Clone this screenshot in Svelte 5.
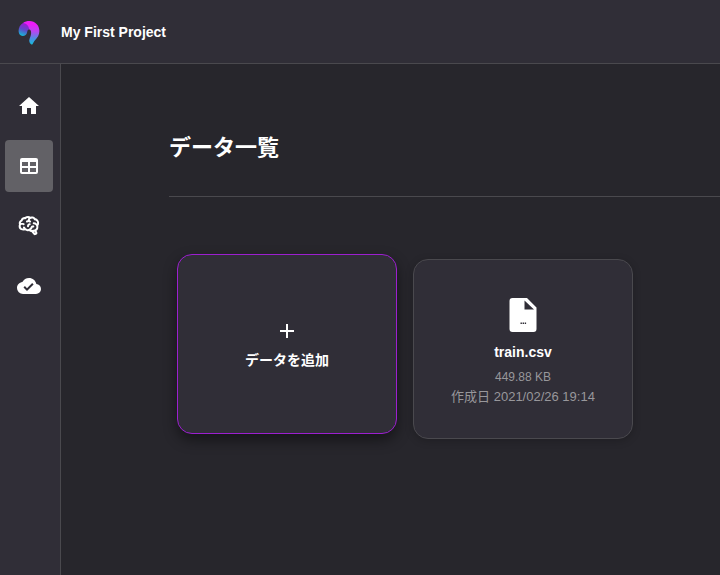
<script lang="ts">
  type NavItem = { id: string; label: string; path: string };

  const navItems: NavItem[] = [
    {
      id: "home",
      label: "ホーム",
      path: "M10,20V14H14V20H19V12H22L12,3L2,12H5V20H10Z",
    },
    {
      id: "data",
      label: "データ",
      path: "M5,4H19A2,2 0 0,1 21,6V18A2,2 0 0,1 19,20H5A2,2 0 0,1 3,18V6A2,2 0 0,1 5,4M5,8V12H11V8H5M13,8V12H19V8H13M5,14V18H11V14H5M13,14V18H19V14H13Z",
    },
    {
      id: "training",
      label: "学習",
      path: "M21.33,12.91C21.42,14.46 20.71,15.95 19.44,16.86L20.21,18.35C20.44,18.8 20.47,19.33 20.27,19.8C20.08,20.27 19.69,20.64 19.21,20.8L18.42,21.05C18.25,21.11 18.06,21.14 17.88,21.14C17.37,21.14 16.89,20.91 16.56,20.5L14.44,18C13.55,17.85 12.71,17.47 12,16.9C11.5,17.05 11,17.13 10.5,17.13C9.62,17.13 8.74,16.86 8,16.34C7.47,16.5 6.93,16.57 6.38,16.56C5.59,16.57 4.81,16.41 4.08,16.11C2.65,15.47 1.7,14.07 1.65,12.5C1.57,11.78 1.69,11.05 2,10.39C1.71,9.64 1.68,8.82 1.93,8.06C2.3,7.11 3,6.32 3.87,5.82C4.45,4.13 6.08,3 7.87,3.12C9.47,1.62 11.92,1.46 13.7,2.75C14.12,2.64 14.56,2.58 15,2.58C16.36,2.55 17.65,3.15 18.5,4.22C20.54,4.75 22,6.57 22.08,8.69C22.13,9.8 21.83,10.89 21.22,11.82C21.29,12.18 21.33,12.54 21.33,12.91M16.33,11.5C16.9,11.57 17.35,12 17.35,12.57A1,1 0 0,1 16.35,13.57H15.72C15.4,14.47 14.84,15.26 14.1,15.86C14.35,15.95 14.61,16 14.87,16.07C20,16 19.4,12.87 19.4,12.82C19.34,11.39 18.14,10.27 16.71,10.33A1,1 0 0,1 15.71,9.33A1,1 0 0,1 16.71,8.33C17.94,8.36 19.12,8.82 20.04,9.63C20.09,9.34 20.12,9.04 20.12,8.74C20.06,7.5 19.5,6.42 17.25,6.21C16,3.25 12.85,4.89 12.85,5.81V5.81C12.82,6.04 13.06,6.53 13.1,6.56A1,1 0 0,1 14.1,7.56C14.1,8.11 13.65,8.56 13.1,8.56V8.56C12.57,8.54 12.07,8.34 11.67,8C11.19,8.31 10.64,8.5 10.07,8.56V8.56C9.5,8.61 9.03,8.21 9,7.66C8.92,7.1 9.33,6.61 9.88,6.56C10.04,6.54 10.82,6.42 10.82,5.79V5.79C10.82,5.13 11.07,4.5 11.5,4C10.58,3.75 9.59,4.08 8.59,5.29C6.75,5 6,5.25 5.45,7.2C4.5,7.67 4,8 3.78,9C4.86,8.78 5.97,8.87 7,9.25C7.5,9.44 7.78,10 7.59,10.54C7.4,11.06 6.82,11.32 6.3,11.13C5.57,10.81 4.75,10.79 4,11.07C3.68,11.34 3.68,11.9 3.68,12.34C3.68,13.08 4.05,13.77 4.68,14.17C5.21,14.44 5.8,14.58 6.39,14.57C6.24,14.31 6.11,14.04 6,13.76C5.81,13.22 6.1,12.63 6.64,12.44C7.18,12.25 7.77,12.54 7.96,13.08C8.36,14.22 9.38,15 10.58,15.13C11.95,15.06 13.17,14.25 13.77,13C14,11.62 15.11,11.5 16.33,11.5M18.33,18.97L17.71,17.67L17,17.83L18,19.08L18.33,18.97M13.68,10.36C13.7,9.83 13.3,9.38 12.77,9.33C12.06,9.29 11.37,9.53 10.84,10C10.27,10.58 9.97,11.38 10,12.19A1,1 0 0,0 11,13.19C11.57,13.19 12,12.74 12,12.19C12,11.92 12.07,11.65 12.23,11.43C12.35,11.33 12.5,11.28 12.66,11.28C13.21,11.31 13.68,10.9 13.68,10.36Z",
    },
    {
      id: "deploy",
      label: "デプロイ",
      path: "M10,17L6.5,13.5L7.91,12.08L10,14.17L15.18,9L16.59,10.41M19.35,10.03C18.67,6.59 15.64,4 12,4C9.11,4 6.6,5.64 5.35,8.03C2.34,8.36 0,10.9 0,14A6,6 0 0,0 6,20H19A5,5 0 0,0 24,15C24,12.28 21.95,10.22 19.35,10.03Z",
    },
  ];

  const files = [
    { name: "train.csv", size: "449.88 KB", created: "2021/02/26 19:14" },
  ];

  let current = $state("data");
</script>

<div class="app">
  <header class="header">
    <svg class="logo" viewBox="0 0 22 26" aria-hidden="true">
      <defs>
        <linearGradient id="tail" x1="0.5" y1="0" x2="0.5" y2="1">
          <stop offset="0.15" stop-color="#ec1cf8" />
          <stop offset="0.45" stop-color="#b448f0" />
          <stop offset="0.75" stop-color="#4890e4" />
          <stop offset="1" stop-color="#10c0d8" />
        </linearGradient>
        <linearGradient id="head" x1="0.6" y1="0" x2="0.3" y2="1">
          <stop offset="0.1" stop-color="#9420d0" />
          <stop offset="0.5" stop-color="#6048c8" />
          <stop offset="1" stop-color="#10c0d8" />
        </linearGradient>
      </defs>
      <path
        fill="url(#tail)"
        d="M5,3C7,1.4 9,1 11.5,1C17.2,1 21.4,5.4 21.4,11C21.4,15.2 19.4,17.8 17,20.2C15.8,21.6 15.2,23.4 14,24.8C11.6,23.6 10.6,21.4 11.6,18.8C12.8,16 13.4,13.8 13,11.6C12.6,9.6 11,8.8 9.8,9.6Z"
      />
      <path
        fill="url(#head)"
        d="M5,3C8,3.2 10.6,5.4 11.2,8.9C9.8,9.4 9.4,10.6 9.2,12C8.8,14.4 7,16 4.8,16C2.2,16 0.6,13.6 0.6,10.8C0.6,7.6 2.2,4.6 5,3Z"
      />
    </svg>
    <span class="project-name">My First Project</span>
  </header>

  <div class="body">
    <nav class="sidebar">
      {#each navItems as item (item.id)}
        <button
          class="nav-btn"
          class:active={current === item.id}
          aria-label={item.label}
          onclick={() => (current = item.id)}
        >
          <svg class="icon" viewBox="0 0 24 24"><path d={item.path} /></svg>
        </button>
      {/each}
    </nav>

    <main class="content">
      <h1 class="title">データ一覧</h1>

      <div class="cards">
        <button class="card add">
          <svg class="icon" viewBox="0 0 24 24">
            <path d="M19,13H13V19H11V13H5V11H11V5H13V11H19V13Z" />
          </svg>
          <span class="card-name">データを追加</span>
        </button>

        {#each files as file (file.name)}
          <button class="card">
            <svg class="file-icon" viewBox="0 0 40 40">
              <path
                fill-rule="evenodd"
                d="M9.5,3H24L33.5,12.5V34A3,3 0 0,1 30.5,37H9.5A3,3 0 0,1 6.5,34V6A3,3 0 0,1 9.5,3ZM21.5,5.5V14.5H31Z"
              />
              <path class="dots" d="M17.5,27.5h1.4v1.6h-1.4zM19.6,27.5h1.4v1.6h-1.4zM21.7,27.5h1.4v1.6h-1.4z" />
            </svg>
            <span class="card-name">{file.name}</span>
            <span class="size">{file.size}</span>
            <span class="date">作成日 {file.created}</span>
          </button>
        {/each}
      </div>
    </main>
  </div>
</div>

<style>
  :global(body) {
    margin: 0;
    background: #27262c;
  }

  .app {
    display: flex;
    flex-direction: column;
    min-height: 100vh;
    color: #fff;
    font-family: "Liberation Sans", "Noto Sans CJK JP", sans-serif;
  }

  .header {
    display: flex;
    align-items: center;
    gap: 21px;
    height: 63px;
    padding: 0 18px;
    background: #302e37;
    border-bottom: 1px solid #4a494e;
  }

  .logo {
    width: 22px;
    height: 26px;
    padding-top: 2px;
  }

  .project-name {
    font-size: 14px;
    font-weight: 700;
  }

  .body {
    display: flex;
    flex: 1;
  }

  .sidebar {
    display: flex;
    flex-direction: column;
    gap: 8px;
    padding: 16px 7px 16px 5px;
    background: #302e37;
    border-right: 1px solid #4a494e;
  }

  .nav-btn {
    display: flex;
    align-items: center;
    justify-content: center;
    width: 48px;
    height: 52px;
    padding: 0;
    border: none;
    border-radius: 4px;
    background: none;
    cursor: pointer;
  }
  .nav-btn.active { background: #626166; }

  .icon {
    width: 24px;
    height: 24px;
    fill: #fff;
  }

  .content {
    flex: 1;
    min-width: 0;
    padding: 66px 0 64px 108px;
  }

  .title {
    margin: 0;
    padding-bottom: 30px;
    border-bottom: 1px solid #4a494e;
    font-size: 22px;
    line-height: 36px;
  }

  .cards {
    display: flex;
    flex-wrap: wrap;
    gap: 16px;
    padding: 62px 8px;
  }

  .card {
    display: flex;
    flex-direction: column;
    align-items: center;
    justify-content: center;
    box-sizing: border-box;
    width: 220px;
    height: 180px;
    padding: 3px 0 0;
    border: 1px solid #4a494e;
    border-radius: 15px;
    background: #302e37;
    box-shadow: 0 2px 8px rgba(0, 0, 0, 0.2);
    color: #fff;
    font-family: inherit;
    cursor: pointer;
  }

  .card.add {
    gap: 5px;
    border-color: #9c1fd0;
    box-shadow: 0 6px 14px rgba(0, 0, 0, 0.45);
    transform: translateY(-5px);
  }

  .card-name {
    font-size: 14px;
    font-weight: 700;
    line-height: 24px;
  }

  .file-icon {
    width: 40px;
    height: 40px;
    margin-bottom: 5px;
    fill: #fff;
  }
  .dots { fill: #302e37; }

  .size,
  .date {
    color: #98979b;
    line-height: 20px;
  }
  .size {
    margin-top: 3px;
    font-size: 12px;
  }
  .date { font-size: 13px; }
</style>
